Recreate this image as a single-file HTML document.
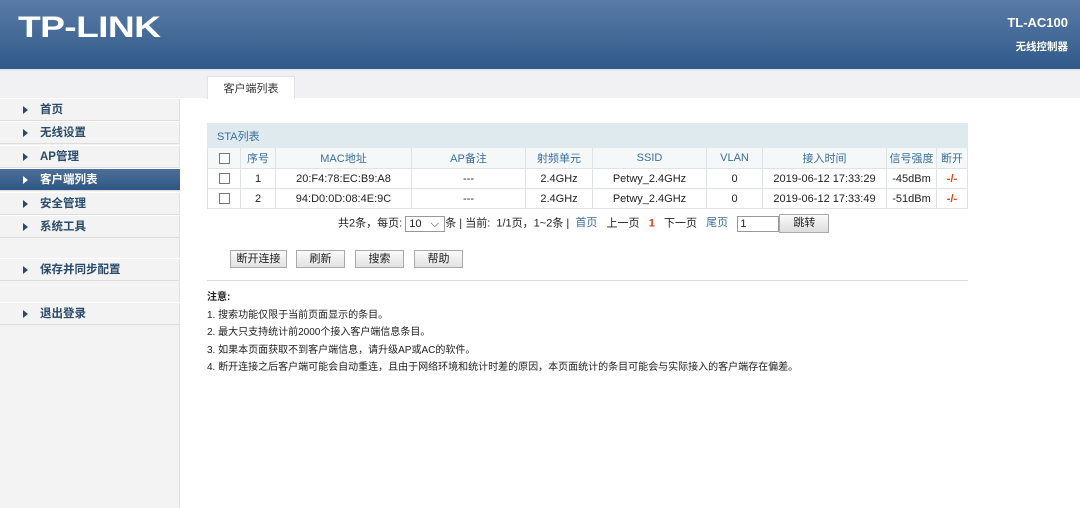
<!DOCTYPE html><html><head><meta charset="utf-8"><style>
*{margin:0;padding:0;box-sizing:border-box}
body{width:1080px;height:508px;overflow:hidden;background:#fff;font-family:"Liberation Sans","Noto Sans CJK SC",sans-serif;font-size:11px;color:#222;position:relative}
.hd{position:absolute;left:0;top:0;width:1080px;height:69px;background:linear-gradient(#5a7ca6,#30598a)}
.logo{position:absolute;left:18px;top:11px;color:#fff;font-weight:bold;font-size:30px;letter-spacing:-0.5px;font-family:"Liberation Sans",sans-serif;transform:scaleX(1.24);transform-origin:left top}
.m1{position:absolute;right:12px;top:15px;color:#fff;font-weight:bold;font-size:13px}
.m2{position:absolute;right:12px;top:39px;color:#fff;font-weight:bold;font-size:10.5px}
.band{position:absolute;left:0;top:69px;width:1080px;height:29px;background:#f1f1f3;border-top:2px solid #e4e6ea}
.tab{position:absolute;left:207px;top:76px;width:88px;height:23px;background:#fff;border:1px solid #e0e3e6;border-bottom:none;text-align:center;line-height:24px;font-size:11px;color:#333}
.side{position:absolute;left:0;top:98px;width:180px;height:410px;background:#f3f3f3;border-right:1px solid #e2e2e2}
.it{position:absolute;left:0;width:180px;height:23px;border-bottom:1px solid #dcdcdc;border-top:1px solid #fff;font-weight:bold;font-size:11.5px;color:#2a4a6a;line-height:22px;padding-left:40px}
.it:before{content:"";position:absolute;left:23px;top:7px;border-left:5px solid #2a4a6a;border-top:4px solid transparent;border-bottom:4px solid transparent}
.it.a{background:linear-gradient(#4d6f99,#2e5684);color:#fff}
.it.a:before{border-left-color:#fff}
table{position:absolute;left:207px;top:123px;border-collapse:collapse;width:761px}
td{border:1px solid #dfe3e6;text-align:center;height:20px;font-size:11px;color:#222}
tr.h td{color:#3a6e9c;background:#f5f8f9;height:21px}
tr.t td{background:#dfeaee;text-align:left;color:#3a6e9c;padding-left:9px;height:24px;border-color:#dfeaee}
.cb{display:inline-block;width:11px;height:11px;border:1px solid #777;vertical-align:middle;background:#fff}
.pg{position:absolute;left:338px;top:214px;font-size:11px;color:#222;white-space:nowrap}
.pg span{display:inline-block}
.btn{position:absolute;top:250px;height:18px;border:1px solid #aaa;background:linear-gradient(#fafafa,#e2e2e2);text-align:center;line-height:16px;font-size:11px}
.hr{position:absolute;left:207px;top:280px;width:761px;border-top:1px solid #ddd}
.note{position:absolute;left:207px;top:289px;font-size:10px;line-height:17.5px;color:#222}
</style></head><body>
<div class="hd"><div class="logo">TP-LINK</div><div class="m1">TL-AC100</div><div class="m2">无线控制器</div></div>
<div class="band"></div>
<div class="tab">客户端列表</div>
<div class="side">
<div class="it" style="top:0">首页</div>
<div class="it" style="top:23px">无线设置</div>
<div class="it" style="top:47px">AP管理</div>
<div class="it a" style="top:70px">客户端列表</div>
<div class="it" style="top:94px">安全管理</div>
<div class="it" style="top:117px">系统工具</div>
<div class="it" style="top:160px">保存并同步配置</div>
<div class="it" style="top:204px">退出登录</div>
</div>
<table>
<tr class="t"><td colspan="11">STA列表</td></tr>
<tr class="h"><td style="width:33px"><span class="cb"></span></td><td style="width:35px">序号</td><td style="width:136px">MAC地址</td><td style="width:114px">AP备注</td><td style="width:67px">射频单元</td><td style="width:114px">SSID</td><td style="width:56px">VLAN</td><td style="width:124px">接入时间</td><td style="width:50px">信号强度</td><td>断开</td></tr>
<tr><td><span class="cb"></span></td><td>1</td><td>20:F4:78:EC:B9:A8</td><td>---</td><td>2.4GHz</td><td>Petwy_2.4GHz</td><td>0</td><td>2019-06-12 17:33:29</td><td>-45dBm</td><td style="color:#e04010;font-weight:bold">-/-</td></tr>
<tr><td><span class="cb"></span></td><td>2</td><td>94:D0:0D:08:4E:9C</td><td>---</td><td>2.4GHz</td><td>Petwy_2.4GHz</td><td>0</td><td>2019-06-12 17:33:49</td><td>-51dBm</td><td style="color:#e04010;font-weight:bold">-/-</td></tr>
</table>
<div class="pg">共2条，每页: <span style="border:1px solid #999;width:40px;height:16px;line-height:14px;padding-left:3px;vertical-align:middle">10&nbsp;&nbsp;&nbsp;⌵</span>条 | 当前:&nbsp; 1/1页，1~2条 |&nbsp; <span style="color:#3a6e9c">首页</span>&nbsp;&nbsp; 上一页&nbsp;&nbsp; <b style="color:#d04010">1</b>&nbsp;&nbsp; 下一页&nbsp;&nbsp; <span style="color:#3a6e9c">尾页</span>&nbsp;&nbsp; <span style="border:1px solid #999;width:42px;height:16px;line-height:14px;padding-left:2px;vertical-align:middle">1</span><span style="border:1px solid #aaa;width:50px;height:19px;line-height:17px;text-align:center;background:linear-gradient(#fafafa,#ddd);vertical-align:middle">跳转</span></div>
<div class="btn" style="left:230px;width:57px">断开连接</div>
<div class="btn" style="left:296px;width:49px">刷新</div>
<div class="btn" style="left:355px;width:49px">搜索</div>
<div class="btn" style="left:414px;width:49px">帮助</div>
<div class="hr"></div>
<div class="note"><b>注意:</b><br>1. 搜索功能仅限于当前页面显示的条目。<br>2. 最大只支持统计前2000个接入客户端信息条目。<br>3. 如果本页面获取不到客户端信息，请升级AP或AC的软件。<br>4. 断开连接之后客户端可能会自动重连，且由于网络环境和统计时差的原因，本页面统计的条目可能会与实际接入的客户端存在偏差。</div>
</body></html>
